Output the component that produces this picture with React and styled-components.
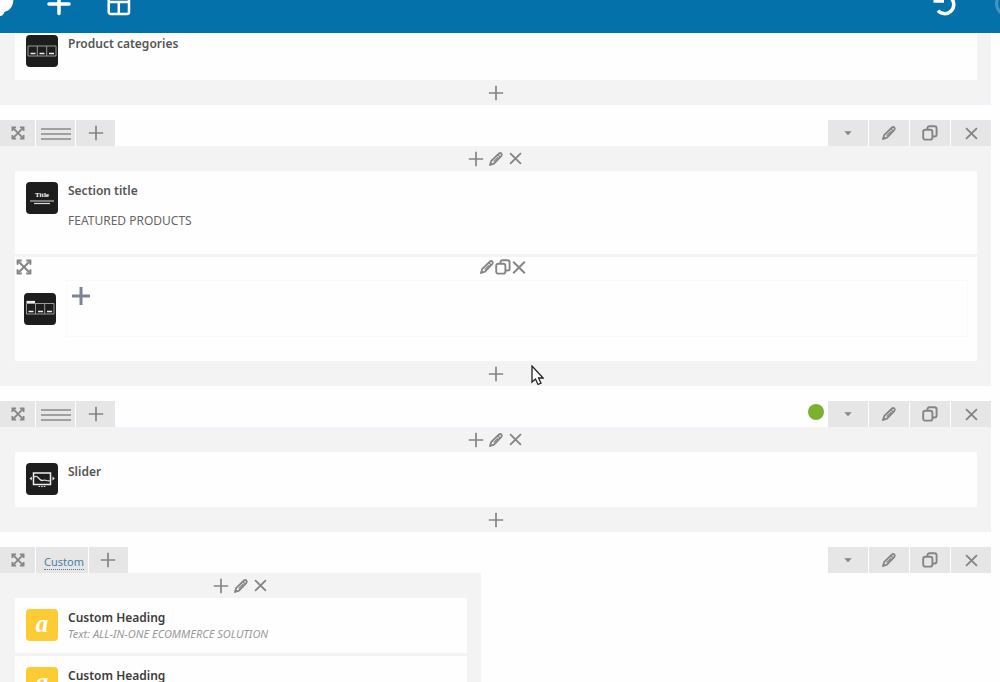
import React from "react";
import styled, { createGlobalStyle } from "styled-components";

const GlobalStyle = createGlobalStyle`
  *, *::before, *::after { box-sizing: border-box; }
  html, body, #root { height: 100%; }
  body {
    margin: 0;
    background: #fefdff;
    color: #555;
    font: 13px/18px "Noto Sans", "Open Sans", sans-serif;
    overflow: hidden;
  }
`;

const Page = styled.div`
  height: 100%;
  overflow: hidden;
`;

const TopBar = styled.header`
  display: flex;
  height: 33px;
  background: #0471aa;
`;

const Spacer = styled.span`
  flex: 1;
`;

const BarButton = styled.button`
  display: block;
  width: ${(p) => p.$width}px;
  height: 17px;
  padding: 0;
  border: 0;
  background: none;
  color: #fff;
  opacity: ${(p) => (p.$faded ? 0.25 : 1)};
  svg { display: block; }
`;

const Rows = styled.main`
  display: flex;
  flex-direction: column;
  gap: 15px;
  margin-right: 9px;
`;

const Toolbar = styled.div`
  display: flex;
  gap: 1px;
  height: 26px;
`;

const ToolButton = styled.button`
  display: flex;
  align-items: center;
  justify-content: center;
  width: ${(p) => p.$width || 40}px;
  padding: 0;
  border: 0;
  background: #e6e6e6;
  color: #858585;
`;

const NameCell = styled.div`
  display: flex;
  align-items: center;
  padding: 4px 4px 0 8px;
  background: #e6e6e6;
`;

const NameLink = styled.a`
  border-bottom: 1px dotted #4a7fa5;
  color: #4a7fa5;
  font-size: 11px;
  line-height: 14px;
  text-decoration: none;
`;

const Status = styled.span`
  width: 16px;
  height: 16px;
  margin: 3px 3px 0 0;
  border-radius: 50%;
  background: #7cb02f;
`;

const Columns = styled.div`
  display: grid;
  grid-template-columns: repeat(${(p) => p.$count}, 1fr);
  gap: 29px;
`;

const Panel = styled.section`
  padding: 0 14px 0 15px;
  background: #f3f3f3;
`;

const Controls = styled.div`
  display: flex;
  align-items: center;
  justify-content: center;
  height: 25px;
  margin: 0 -14px 0 -15px;
`;

const IconButton = styled.button`
  display: flex;
  align-items: center;
  justify-content: center;
  width: ${(p) => p.$width || 20}px;
  height: 20px;
  padding: 0;
  border: 0;
  background: none;
  color: ${(p) => p.$color || "#858585"};
`;

const Stack = styled.div`
  display: flex;
  flex-direction: column;
  gap: 3px;
`;

const Card = styled.article`
  display: flex;
  gap: 10px;
  min-height: ${(p) => p.$height || 55}px;
  padding: ${(p) => (p.$clipped ? 2 : 11)}px 11px 11px;
  background: #fefefe;
`;

const Title = styled.h4`
  margin: 0;
  color: ${(p) => (p.$dark ? "#3c3c3c" : "#555")};
  font-size: 12px;
  font-weight: 600;
  line-height: 18px;
`;

const Content = styled.p`
  margin: 12px 0 0;
  color: #666;
  font-size: 12px;
  line-height: 18px;
`;

const Note = styled.p`
  margin: 0;
  color: #999;
  font-size: 11px;
  font-style: italic;
  line-height: 14px;
`;

const Nested = styled.article`
  padding-bottom: 24px;
  background: #fefefe;
`;

const NestedBar = styled.div`
  display: flex;
  align-items: center;
  height: 20px;
  padding: 0 4px 0 1px;
`;

const NestedTools = styled.div`
  display: flex;
  flex: 1;
  justify-content: center;
`;

const NestedBody = styled.div`
  display: flex;
  align-items: center;
  gap: 10px;
  margin-top: 3px;
  padding: 0 9px;
`;

const DropArea = styled.div`
  flex: 1;
  height: 57px;
  padding: 5px 4px;
  border: 1px solid #f9f8fb;
`;

const Tile = styled.svg`
  display: block;
  flex: none;
  width: 32px;
  height: 32px;
`;

const Pointer = styled.svg`
  position: absolute;
  left: 531px;
  top: 365px;
  width: 13px;
  height: 21px;
`;

const Icon = ({ size = 16, width = 1.8, children }) => (
  <svg width={size} height={size} viewBox="0 0 16 16" fill="none" stroke="currentColor" strokeWidth={width} aria-hidden="true">
    {children}
  </svg>
);

const Plus = ({ size = 16, width = 1.7 }) => (
  <Icon size={size} width={width}><path d="M8 .8v14.400M.8 8h14.400" /></Icon>
);
const Close = ({ size = 16 }) => (
  <Icon size={size} width={2}><path d="M2.200 2.200l11.600 11.600M13.800 2.200L2.200 13.800" /></Icon>
);
const Pencil = () => (
  <Icon width={1.8}>
    <path d="M2 14l1.300-4.200 7.700-7.300q1.200-1 2.300 0t.1 2.300L6 12.600z" strokeLinejoin="round" />
    <path d="M9.800 3.800l2.600 2.400M5.600 10.600l4.600-4.400" strokeWidth="1.300" />
    <path d="M1.300 14.700l1-3.400 2.500 2.300z" fill="currentColor" stroke="none" />
  </Icon>
);
const Copy = () => (
  <Icon width={1.9}>
    <rect x="1.200" y="4.800" width="9.200" height="9.800" rx="2.200" />
    <path d="M5.400 4.800V3.400q0-2.100 2.100-2.100h5q2.100 0 2.100 2.100v6q0 2.100-2.100 2.100h-2" />
  </Icon>
);
const Move = ({ size = 16 }) => (
  <Icon size={size} width={2}>
    <path d="M2.500 2.500l11 11M13.500 2.500l-11 11" />
    <path d="M1.600 5.800V1.600h4.200M10.200 1.600h4.200v4.200M14.400 10.200v4.200h-4.200M5.800 14.400H1.600v-4.200" />
  </Icon>
);
const Caret = () => (
  <Icon><path d="M4.300 6.300h7.400L8 10.200z" fill="currentColor" stroke="none" /></Icon>
);
const Lines = () => (
  <svg width="30" height="14" viewBox="0 0 30 14" fill="none" stroke="#a0a0a0" strokeWidth="2" aria-hidden="true">
    <path d="M0 3h30M0 8h30M0 13h30" />
  </svg>
);

const DarkTile = ({ children }) => (
  <Tile viewBox="0 0 32 32" fill="none" aria-hidden="true">
    <rect width="32" height="32" rx="4" fill="#1d1d1d" />
    {children}
  </Tile>
);
const CategoriesTile = () => (
  <DarkTile>
    <path d="M2 11h28v10H2zM11.300 11v10M20.700 11v10" stroke="#999" />
    <path d="M4.500 18.500h5M13.500 18.500h5M23 18.500h5" stroke="#eee" strokeWidth="1.300" />
  </DarkTile>
);
const TabsTile = () => (
  <DarkTile>
    <path d="M2.500 10.500h27.500v10.500H2.500zM11.500 11v10M20.700 11v10" stroke="#999" />
    <path d="M2.500 9h8.500" stroke="#eee" strokeWidth="2.200" />
    <path d="M4.500 18.500h5M14 18.500h5M23 18.500h5" stroke="#eee" strokeWidth="1.300" />
  </DarkTile>
);
const TitleTile = () => (
  <DarkTile>
    <text x="16" y="15" fill="#fff" fontSize="7" fontWeight="700" fontFamily="Liberation Serif, serif" textAnchor="middle">Title</text>
    <path d="M4 19h24" stroke="#bbb" strokeWidth="1.200" />
    <path d="M8 21.500h16" stroke="#ddd" strokeWidth="1.200" />
  </DarkTile>
);
const SliderTile = () => (
  <DarkTile>
    <rect x="7.500" y="10" width="17" height="11.500" stroke="#eee" strokeWidth="1.500" />
    <path d="M8 14q2.500-1.500 4.500 1t4 2.500q2-.8 4 0t4 0" stroke="#ddd" strokeWidth="1.300" />
    <path d="M5.800 13.500L3.500 15.500l2.300 2zM26.500 13.500l2.300 2-2.300 2z" fill="#eee" />
    <path d="M12.500 23.500h7" stroke="#ddd" strokeWidth="1.200" strokeDasharray="1.600 1" />
  </DarkTile>
);
const HeadingTile = () => (
  <Tile viewBox="0 0 32 32" aria-hidden="true">
    <rect width="32" height="32" rx="4" fill="#fdcb33" />
    <text x="16" y="22.500" fill="#fff" fontSize="25" fontWeight="700" fontStyle="italic" fontFamily="Liberation Serif, serif" textAnchor="middle">a</text>
  </Tile>
);

const RowToolbar = ({ name, status }) => (
  <Toolbar>
    <ToolButton $width={35} aria-label="Move row"><Move size={14} /></ToolButton>
    {name ? (
      <NameCell><NameLink href="#layout">{name}</NameLink></NameCell>
    ) : (
      <ToolButton $width={39} aria-label="Row layout"><Lines /></ToolButton>
    )}
    <ToolButton $width={39} aria-label="Add column"><Plus /></ToolButton>
    <Spacer />
    {status && <Status />}
    <ToolButton aria-label="Toggle row"><Caret /></ToolButton>
    <ToolButton aria-label="Edit row"><Pencil /></ToolButton>
    <ToolButton aria-label="Clone row"><Copy /></ToolButton>
    <ToolButton aria-label="Delete row"><Close size={15} /></ToolButton>
  </Toolbar>
);

const ColumnControls = () => (
  <Controls>
    <IconButton aria-label="Add element"><Plus /></IconButton>
    <IconButton aria-label="Edit column"><Pencil /></IconButton>
    <IconButton aria-label="Delete column"><Close size={15} /></IconButton>
  </Controls>
);

const AddControl = () => (
  <Controls>
    <IconButton aria-label="Append element"><Plus /></IconButton>
  </Controls>
);

const HeadingCard = ({ text }) => (
  <Card>
    <HeadingTile />
    <div>
      <Title $dark>Custom Heading</Title>
      <Note>Text: {text}</Note>
    </div>
  </Card>
);

export default function App() {
  return (
    <Page>
      <GlobalStyle />
      <TopBar>
        <BarButton $width={47} aria-label="Page builder home">
          <svg width="14" height="17" viewBox="0 0 14 17">
            <path d="M0 0h13.300c0 5-2.300 8.500-5.300 10.500-2 1-3.500.8-4 2.200-.5 1.800-1.500 3.300-4 3.300z" fill="#fff" />
          </svg>
        </BarButton>
        <BarButton $width={60} aria-label="Add element">
          <svg width="24" height="17" viewBox="0 0 24 17" fill="none" stroke="#fff" strokeWidth="3.500" strokeLinecap="round">
            <path d="M12-4v17.500M2 4h20" />
          </svg>
        </BarButton>
        <BarButton $width={24} aria-label="Templates">
          <svg width="24" height="17" viewBox="0 0 24 17" fill="none" stroke="#fff" strokeWidth="2.500">
            <rect x="1.700" y="-8" width="20.300" height="22" rx="2" />
            <path d="M2 2h20M11.800 2v12" />
          </svg>
        </BarButton>
        <Spacer />
        <BarButton $width={61} aria-label="Undo">
          <svg width="24" height="17" viewBox="0 0 24 17" fill="none" stroke="#fff" strokeWidth="3.500">
            <path d="M.5 1h10.500" />
            <path d="M5 10.600a9 9 0 1 0 13.500-12" />
          </svg>
        </BarButton>
        <BarButton $width={6} $faded aria-label="Redo">
          <svg width="6" height="17" viewBox="0 0 6 17" fill="none" stroke="#fff" strokeWidth="3">
            <path d="M4-2q-4 8 3 15" />
          </svg>
        </BarButton>
      </TopBar>

      <Rows>
        <Panel>
          <Card $height={47} $clipped>
            <CategoriesTile />
            <Title>Product categories</Title>
          </Card>
          <AddControl />
        </Panel>

        <div>
          <RowToolbar />
          <Panel>
            <ColumnControls />
            <Stack>
              <Card $height={83}>
                <TitleTile />
                <div>
                  <Title>Section title</Title>
                  <Content>FEATURED PRODUCTS</Content>
                </div>
              </Card>
              <Nested>
                <NestedBar>
                  <IconButton $width={16} aria-label="Move tabs"><Move /></IconButton>
                  <NestedTools>
                    <IconButton $width={16} aria-label="Edit tabs"><Pencil /></IconButton>
                    <IconButton $width={16} aria-label="Clone tabs"><Copy /></IconButton>
                    <IconButton $width={16} aria-label="Delete tabs"><Close size={17} /></IconButton>
                  </NestedTools>
                </NestedBar>
                <NestedBody>
                  <TabsTile />
                  <DropArea>
                    <IconButton $color="#7c858f" aria-label="Add tab content"><Plus size={22} width={2.4} /></IconButton>
                  </DropArea>
                </NestedBody>
              </Nested>
            </Stack>
            <AddControl />
          </Panel>
        </div>

        <div>
          <RowToolbar status />
          <Panel>
            <ColumnControls />
            <Card>
              <SliderTile />
              <Title>Slider</Title>
            </Card>
            <AddControl />
          </Panel>
        </div>

        <div>
          <RowToolbar name="Custom" />
          <Columns $count={2}>
            <Panel>
              <ColumnControls />
              <Stack>
                <HeadingCard text="ALL-IN-ONE ECOMMERCE SOLUTION" />
                <HeadingCard text="ALL-IN-ONE ECOMMERCE SOLUTION" />
              </Stack>
            </Panel>
          </Columns>
        </div>
      </Rows>

      <Pointer viewBox="0 0 13 21" aria-hidden="true">
        <path d="M1 1v16l3.500-3 2.500 5.500 3-1.300-2.500-5.200h4.700z" fill="#fff" stroke="#222" strokeWidth="1.300" />
      </Pointer>
    </Page>
  );
}
